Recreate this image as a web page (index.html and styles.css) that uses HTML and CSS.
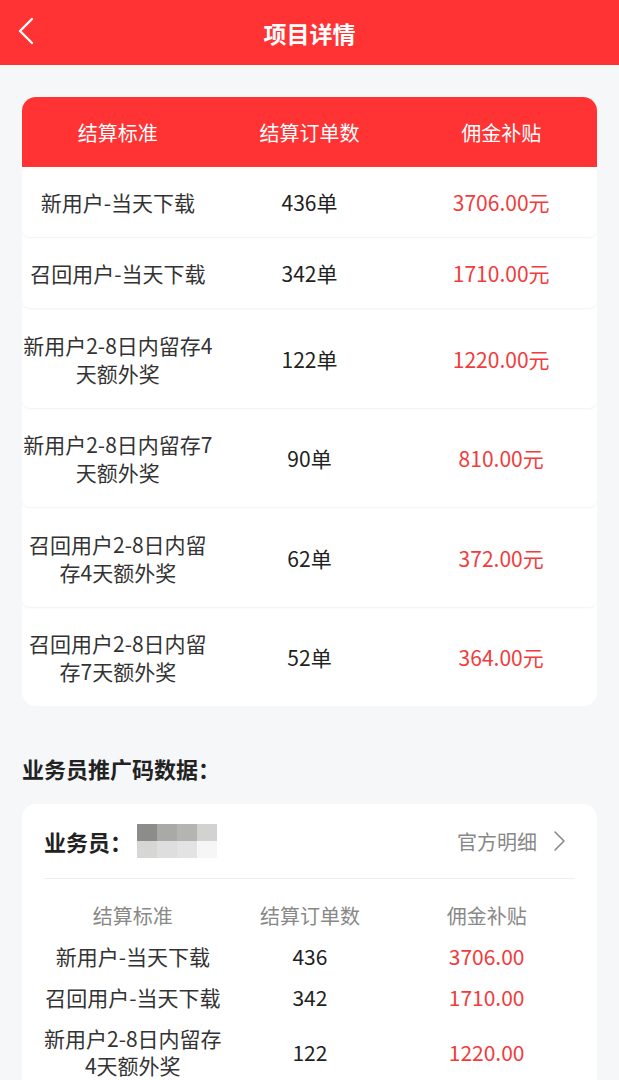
FILE: index.html
```html
<!DOCTYPE html>
<html>
<head>
  <meta charset="utf-8">
  <title>项目详情</title>
  <link rel="stylesheet" href="styles.css">
</head>
<body>
  <div class="nav">
    <svg class="nav-back" width="20" height="30" viewBox="0 0 20 30">
      <path d="M15 3 L3 15 L15 27" fill="none" stroke="#fff" stroke-width="2.4" stroke-linecap="round" stroke-linejoin="round"/>
    </svg>
    <div class="nav-title">项目详情</div>
  </div>

  <div class="page">
    <div class="card table-card">
      <div class="t-head">
        <div>结算标准</div>
        <div>结算订单数</div>
        <div>佣金补贴</div>
      </div>
      <div class="t-row"><div>新用户-当天下载</div><div class="num">436单</div><div class="money">3706.00元</div></div>
      <div class="t-row"><div>召回用户-当天下载</div><div class="num">342单</div><div class="money">1710.00元</div></div>
      <div class="t-row"><div>新用户2-8日内留存4天额外奖</div><div class="num">122单</div><div class="money">1220.00元</div></div>
      <div class="t-row"><div>新用户2-8日内留存7天额外奖</div><div class="num">90单</div><div class="money">810.00元</div></div>
      <div class="t-row"><div>召回用户2-8日内留存4天额外奖</div><div class="num">62单</div><div class="money">372.00元</div></div>
      <div class="t-row"><div>召回用户2-8日内留存7天额外奖</div><div class="num">52单</div><div class="money">364.00元</div></div>
    </div>

    <div class="section-title">业务员推广码数据：</div>

    <div class="card staff-card">
      <div class="staff-head">
        <div class="staff-name">
          <span>业务员：</span>
          <span class="mosaic">
            <i style="background:#8c8c8a"></i><i style="background:#a9a9a7"></i><i style="background:#b4b4b2"></i><i style="background:#d2d2d0"></i>
            <i style="background:#d6d6d4"></i><i style="background:#dedede"></i><i style="background:#e3e3e3"></i><i style="background:#f6f6f6"></i>
          </span>
        </div>
        <div class="staff-link">
          官方明细
          <svg width="14" height="22" viewBox="0 0 14 22">
            <path d="M2 2 L11 11 L2 20" fill="none" stroke="#888" stroke-width="1.6" stroke-linecap="round" stroke-linejoin="round"/>
          </svg>
        </div>
      </div>
      <div class="s-table">
        <div class="s-th">结算标准</div><div class="s-th">结算订单数</div><div class="s-th">佣金补贴</div>
        <div>新用户-当天下载</div><div class="num">436</div><div class="money">3706.00</div>
        <div>召回用户-当天下载</div><div class="num">342</div><div class="money">1710.00</div>
        <div class="nowrap">新用户2-8日内留存<br>4天额外奖</div><div class="num">122</div><div class="money">1220.00</div>
      </div>
    </div>
  </div>
</body>
</html>
```

FILE: styles.css
```css
body { margin: 0; background: #f6f7f9; font-family: "Noto Sans CJK SC", "Noto Sans", sans-serif; color: #333; }

.nav { height: 65px; background: #ff3333; display: flex; align-items: center; justify-content: center; position: relative; }
.nav-back { position: absolute; left: 17px; top: 16px; }
.nav-title { color: #fff; font-size: 23px; font-weight: bold; }

.page { padding: 32px 22px 0; }
.card { background: #fff; border-radius: 14px; overflow: hidden; }

.t-head, .t-row { display: grid; grid-template-columns: 1fr 1fr 1fr; align-items: center; text-align: center; }
.t-head { height: 70px; background: #ff3333; color: #fff; font-size: 20px; }
.t-row { padding: 20.75px 0; font-size: 21px; line-height: 28px; color: #333; border-radius: 8px; box-shadow: 0 1px 2px rgba(0, 0, 0, 0.06); margin-bottom: 2px; }
.t-row:last-child { margin-bottom: 0; }

.num { color: #222; }
.money { color: #f03c3c; }

.section-title { margin: 47px 0 21px; font-size: 22px; font-weight: bold; color: #222; line-height: 30px; }

.staff-card { padding: 0 22px 20px; }
.staff-head { height: 74px; display: flex; align-items: center; justify-content: space-between; border-bottom: 1px solid #eeeeee; }
.staff-name { display: flex; align-items: center; font-size: 22px; font-weight: bold; color: #222; }
.mosaic { display: grid; grid-template-columns: repeat(4, 20px); grid-template-rows: repeat(2, 17px); margin-left: 5px; }
.mosaic i { display: block; }
.staff-link { display: flex; align-items: center; gap: 16px; font-size: 20px; color: #888; padding-right: 8px; }

.s-table { display: grid; grid-template-columns: 1fr 1fr 1fr; row-gap: 14px; padding-top: 22px; text-align: center; font-size: 21px; line-height: 27px; align-items: center; }
.s-th { font-size: 20px; color: #888; line-height: 30px; margin-bottom: -2px; }
.nowrap { white-space: nowrap; }
```
